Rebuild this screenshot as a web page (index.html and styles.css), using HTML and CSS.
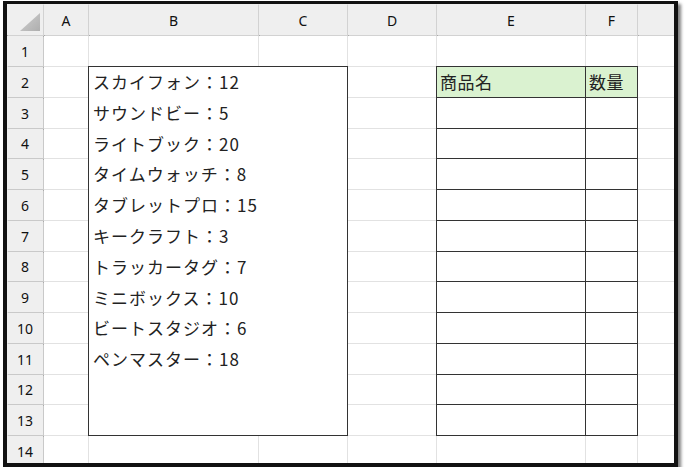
FILE: index.html
```html
<!DOCTYPE html>
<html lang="ja">
<head>
  <meta charset="UTF-8">
  <title>在庫一覧</title>
  <link rel="stylesheet" href="styles.css">
</head>
<body>
<div class="frame">
  <div class="sheet">
    <!-- 見出し行 -->
    <div class="hd corner"></div>
    <div class="hd">A</div>
    <div class="hd">B</div>
    <div class="hd">C</div>
    <div class="hd">D</div>
    <div class="hd">E</div>
    <div class="hd">F</div>
    <div class="hd"></div>

    <!-- B2:C13 の枠 -->
    <div class="box">
      <div class="line">スカイフォン：12</div>
      <div class="line">サウンドビー：5</div>
      <div class="line">ライトブック：20</div>
      <div class="line">タイムウォッチ：8</div>
      <div class="line">タブレットプロ：15</div>
      <div class="line">キークラフト：3</div>
      <div class="line">トラッカータグ：7</div>
      <div class="line">ミニボックス：10</div>
      <div class="line">ビートスタジオ：6</div>
      <div class="line">ペンマスター：18</div>
    </div>

    <!-- 1 -->
    <div class="rn">1</div>
    <div class="cell"></div><div class="cell"></div><div class="cell"></div><div class="cell"></div>
    <div class="cell"></div><div class="cell"></div><div class="cell"></div>

    <!-- 2 -->
    <div class="rn">2</div>
    <div class="cell"></div><div class="cell"></div>
    <div class="tb head">商品名</div><div class="tb head">数量</div>
    <div class="cell"></div>

    <div class="rn">3</div>
    <div class="cell"></div><div class="cell"></div>
    <div class="tb"></div><div class="tb"></div>
    <div class="cell"></div>

    <div class="rn">4</div>
    <div class="cell"></div><div class="cell"></div>
    <div class="tb"></div><div class="tb"></div>
    <div class="cell"></div>

    <div class="rn">5</div>
    <div class="cell"></div><div class="cell"></div>
    <div class="tb"></div><div class="tb"></div>
    <div class="cell"></div>

    <div class="rn">6</div>
    <div class="cell"></div><div class="cell"></div>
    <div class="tb"></div><div class="tb"></div>
    <div class="cell"></div>

    <div class="rn">7</div>
    <div class="cell"></div><div class="cell"></div>
    <div class="tb"></div><div class="tb"></div>
    <div class="cell"></div>

    <div class="rn">8</div>
    <div class="cell"></div><div class="cell"></div>
    <div class="tb"></div><div class="tb"></div>
    <div class="cell"></div>

    <div class="rn">9</div>
    <div class="cell"></div><div class="cell"></div>
    <div class="tb"></div><div class="tb"></div>
    <div class="cell"></div>

    <div class="rn">10</div>
    <div class="cell"></div><div class="cell"></div>
    <div class="tb"></div><div class="tb"></div>
    <div class="cell"></div>

    <div class="rn">11</div>
    <div class="cell"></div><div class="cell"></div>
    <div class="tb"></div><div class="tb"></div>
    <div class="cell"></div>

    <div class="rn">12</div>
    <div class="cell"></div><div class="cell"></div>
    <div class="tb"></div><div class="tb"></div>
    <div class="cell"></div>

    <div class="rn">13</div>
    <div class="cell"></div><div class="cell"></div>
    <div class="tb"></div><div class="tb"></div>
    <div class="cell"></div>

    <!-- 14 -->
    <div class="rn">14</div>
    <div class="cell"></div><div class="cell"></div><div class="cell"></div><div class="cell"></div>
    <div class="cell"></div><div class="cell"></div><div class="cell"></div>
  </div>
</div>
</body>
</html>
```

FILE: styles.css
```css
body {
  margin: 0;
  padding: 0;
  background-color: #fff;
}

.frame {
  box-sizing: border-box;
  width: 675px;
  height: 466px;
  margin: 1px 0 0 3px;
  border: 4px solid #111;
  border-top-width: 3px;
  box-shadow: 3px 3px 3px rgba(0, 0, 0, 0.5);
  overflow: hidden;
  background-color: #fff;
}

.sheet {
  display: grid;
  grid-template-columns: 36px 44px 169px 88px 88px 148px 51px 1fr;
  grid-template-rows: 31px 30px 30px 30px 29px 30px 30px 30px 29px 30px 30px 30px 29px 30px 30px;
  gap: 1px;
  background-color: #e2e2e2;
  font-family: "Noto Sans CJK JP", "Noto Sans", sans-serif;
  font-size: 17px;
  color: #222;
}

.cell {
  background-color: #fff;
}

.hd,
.rn {
  display: flex;
  align-items: center;
  justify-content: center;
  background-color: #efefef;
  font-family: "Noto Sans", "Open Sans", sans-serif;
  font-size: 14px;
  color: #111;
}

.hd {
  box-shadow: 1px 1px 0 #d2d2d2, 0 1px 0 #aaa;
  padding-top: 1px;
}

.rn {
  box-shadow: 1px 1px 0 #c9c9c9, 1px 0 0 #aaa;
}

.corner {
  align-items: flex-end;
  justify-content: flex-end;
  padding: 0 3px 4px 0;
  box-sizing: border-box;
}

.corner::after {
  content: "";
  width: 20px;
  height: 18px;
  background: linear-gradient(135deg, #d0d0d0, #aeaeae);
  clip-path: polygon(100% 0, 100% 100%, 0 100%);
}

.box {
  grid-column: 3 / 5;
  grid-row: 3 / 15;
  background-color: #fff;
  outline: 1px solid #333;
  padding-left: 4px;
}

.line {
  height: 30.8px;
  line-height: 30px;
  letter-spacing: 1px;
  white-space: nowrap;
}

.tb {
  background-color: #fff;
  outline: 1px solid #333;
  padding-left: 3px;
  line-height: 30px;
  letter-spacing: 0.5px;
  white-space: nowrap;
}

.tb.head {
  background-color: #daf2d0;
}
```
